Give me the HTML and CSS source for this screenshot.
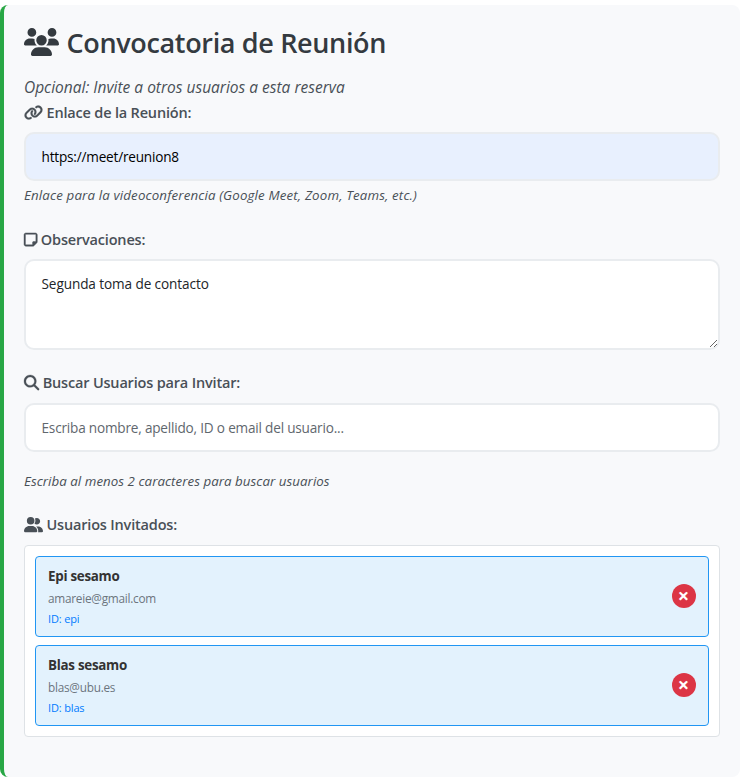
FILE: index.html
```
<!DOCTYPE html>
<html lang="es">
<head>
<meta charset="utf-8">
<title>Convocatoria de Reunión</title>
<link rel="stylesheet" href="styles.css">
</head>
<body>
<section class="panel">
  <h3 class="title">
    <svg class="icon" viewBox="0 0 640 512"><path d="M144 0a80 80 0 1 1 0 160A80 80 0 1 1 144 0zM512 0a80 80 0 1 1 0 160A80 80 0 1 1 512 0zM0 298.700C0 239.800 47.800 192 106.700 192h42.700c15.900 0 31 3.500 44.600 9.700c-1.300 7.200-1.900 14.700-1.900 22.300c0 38.200 16.800 72.500 43.300 96c-.2 0-.4 0-.7 0H21.300C9.600 320 0 310.400 0 298.700zM405.300 320c-.2 0-.4 0-.7 0c26.600-23.500 43.300-57.800 43.300-96c0-7.600-.7-15-1.900-22.300c13.600-6.300 28.700-9.700 44.600-9.700h42.700C592.200 192 640 239.800 640 298.700c0 11.800-9.600 21.300-21.300 21.300H405.300zM224 224a96 96 0 1 1 192 0 96 96 0 1 1 -192 0zM128 485.300C128 411.700 187.700 352 261.300 352H378.700C452.300 352 512 411.700 512 485.300c0 14.700-11.900 26.700-26.700 26.700H154.700c-14.700 0-26.700-11.900-26.700-26.700z"/></svg>
    <span>Convocatoria de Reunión</span>
  </h3>
  <p class="subtitle">Opcional: Invite a otros usuarios a esta reserva</p>

  <div class="group group-link">
    <label class="label" for="link">
      <svg class="icon icon-link" viewBox="0 0 640 512"><path d="M579.8 267.7c56.5-56.5 56.5-148 0-204.5c-50-50-128.8-56.5-186.3-15.4l-1.6 1.1c-14.4 10.3-17.7 30.3-7.4 44.6s30.3 17.7 44.6 7.4l1.6-1.1c32.1-22.9 76-19.3 103.8 8.6c31.5 31.5 31.5 82.5 0 114L422.3 334.8c-31.5 31.5-82.5 31.5-114 0c-27.9-27.9-31.5-71.8-8.6-103.8l1.1-1.6c10.3-14.4 6.9-34.4-7.4-44.6s-34.4-6.9-44.6 7.4l-1.1 1.6C206.5 251.2 213 330 263 380c56.5 56.5 148 56.5 204.5 0L579.8 267.7zM60.2 244.3c-56.5 56.5-56.5 148 0 204.5c50 50 128.8 56.5 186.3 15.4l1.6-1.1c14.4-10.3 17.7-30.3 7.4-44.6s-30.3-17.7-44.6-7.4l-1.6 1.1c-32.1 22.9-76 19.3-103.8-8.6C74 372 74 321 105.5 289.5L217.7 177.2c31.5-31.5 82.5-31.5 114 0c27.9 27.9 31.5 71.8 8.600 103.900l-1.1 1.600c-10.300 14.400-6.900 34.400 7.400 44.600s34.400 6.900 44.600-7.400l1.100-1.600C433.500 260.800 427 182 377 132c-56.500-56.500-148-56.500-204.500 0L60.200 244.300z"/></svg>
      <span>Enlace de la Reunión:</span>
    </label>
    <input class="control filled" id="link" type="text" value="https://meet/reunion8">
    <p class="hint">Enlace para la videoconferencia (Google Meet, Zoom, Teams, etc.)</p>
  </div>

  <div class="group group-notes">
    <label class="label" for="notes">
      <svg class="icon icon-note" viewBox="0 0 448 512"><path d="M64 80C55.200 80 48 87.200 48 96V416C48 424.800 55.200 432 64 432H288V352C288 334.300 302.300 320 320 320H400V96C400 87.200 392.800 80 384 80H64zM288 480H64C28.700 480 0 451.300 0 416V96C0 60.700 28.700 32 64 32H384C419.300 32 448 60.700 448 96V325.500C448 342.500 441.300 358.800 429.300 370.800L338.800 461.300C326.800 473.300 310.500 480 293.500 480H288z"/></svg>
      <span>Observaciones:</span>
    </label>
    <textarea class="control notes" id="notes">Segunda toma de contacto</textarea>
  </div>

  <div class="group group-search">
    <label class="label" for="search">
      <svg class="icon icon-search" viewBox="0 0 512 512"><path d="M416 208c0 45.900-14.900 88.300-40 122.700L502.600 457.400c12.500 12.500 12.500 32.800 0 45.300s-32.800 12.500-45.300 0L330.700 376c-34.400 25.200-76.800 40-122.700 40C93.100 416 0 322.900 0 208S93.100 0 208 0S416 93.100 416 208zM208 352a144 144 0 1 0 0-288 144 144 0 1 0 0 288z"/></svg>
      <span>Buscar Usuarios para Invitar:</span>
    </label>
    <input class="control" id="search" type="text" placeholder="Escriba nombre, apellido, ID o email del usuario...">
    <p class="hint hint-search">Escriba al menos 2 caracteres para buscar usuarios</p>
  </div>

  <div class="group">
    <div class="label">
      <svg class="icon" viewBox="0 0 640 512"><path d="M96 128a128 128 0 1 1 256 0A128 128 0 1 1 96 128zM0 482.300C0 383.800 79.800 304 178.300 304h91.400C368.200 304 448 383.800 448 482.300c0 16.400-13.300 29.700-29.700 29.700H29.700C13.300 512 0 498.700 0 482.300zM609.300 512H471.400c5.400-9.400 8.600-20.300 8.600-32v-8c0-60.700-27.100-115.200-69.800-151.800c2.400-.1 4.700-.2 7.100-.2h61.400C567.800 320 640 392.200 640 481.300c0 17-13.800 30.700-30.700 30.700zM432 256c-31 0-59-12.600-79.300-32.900C372.400 196.500 384 163.600 384 128c0-26.800-6.600-52.100-18.300-74.300C384.300 40.100 407.200 32 432 32c61.900 0 112 50.100 112 112s-50.100 112-112 112z"/></svg>
      <span>Usuarios Invitados:</span>
    </div>
    <div class="guests">
      <div class="guest">
        <div class="info">
          <div class="name">Epi sesamo</div>
          <div class="email">amareie@gmail.com</div>
          <div class="uid">ID: epi</div>
        </div>
        <button class="remove" type="button">×</button>
      </div>
      <div class="guest">
        <div class="info">
          <div class="name">Blas sesamo</div>
          <div class="email">blas@ubu.es</div>
          <div class="uid">ID: blas</div>
        </div>
        <button class="remove" type="button">×</button>
      </div>
    </div>
  </div>
</section>
</body>
</html>
```
FILE: styles.css
```
* { box-sizing: border-box; }
body {
  margin: 0;
  padding-top: 5px;
  background: #fff;
  font-family: "Open Sans", "Noto Sans", sans-serif;
  color: #495057;
}
.panel {
  width: 740px;
  height: 772px;
  padding: 20px 20px 0;
  background: #f8f9fb;
  border-left: 4px solid #28a745;
  border-radius: 8px;
}
.title, .subtitle, .hint { margin: 0; white-space: nowrap; }
.title {
  display: flex;
  align-items: center;
  gap: 8px;
  height: 36px;
  color: #343a40;
  font-size: 27px;
  font-weight: 600;
  letter-spacing: -0.34px;
  line-height: 36px;
}
.icon {
  flex: none;
  width: 19px;
  height: 15.2px;
  margin-left: -0.5px;
  fill: currentColor;
  overflow: visible;
}
.title .icon { width: 35px; height: 28px; margin-bottom: 2px; }
.icon-link { stroke: currentColor; stroke-width: 8px; }
.icon-note { width: 13.3px; stroke: currentColor; stroke-width: 14px; }
.icon-search { width: 15.2px; stroke: currentColor; stroke-width: 10px; }
.subtitle {
  margin-top: 14px;
  height: 26px;
  font-size: 15.5px;
  line-height: 24px;
  font-style: italic;
}
.label {
  display: flex;
  align-items: center;
  gap: 4px;
  height: 24px;
  font-size: 14.5px;
  font-weight: 600;
  letter-spacing: -0.18px;
  line-height: 24px;
  white-space: nowrap;
}
.control {
  display: block;
  width: 100%;
  height: 49px;
  margin: 8px 0 0;
  padding: 0 15.5px;
  border: 2px solid #e9ecef;
  border-radius: 10px;
  outline: 0;
  background: #fff;
  color: #212529;
  font: 13.6px "Open Sans", "Noto Sans", sans-serif;
  letter-spacing: -0.2px;
}
.control::placeholder { color: #5f676e; opacity: 1; }
.filled { margin-top: 7px; background: #e8f0fe; color: #000; }
.notes {
  height: 91px;
  margin-top: 7px;
  padding-top: 13px;
  line-height: 20px;
  letter-spacing: -0.1px;
  resize: vertical;
}
.hint {
  margin-top: 4px;
  height: 20px;
  font-size: 13.3px;
  line-height: 20px;
  letter-spacing: 0.15px;
  font-style: italic;
}
.hint-search { margin-top: 19px; letter-spacing: 0.05px; }
.group-link { height: 127px; }
.group-notes { height: 143px; }
.group-search { height: 142px; }
.guests {
  display: flex;
  flex-direction: column;
  gap: 8px;
  height: 192px;
  margin-top: 8px;
  padding: 10px;
  border: 1px solid #dee2e6;
  border-radius: 4px;
  background: #fff;
}
.guest {
  display: flex;
  align-items: center;
  justify-content: space-between;
  height: 81px;
  padding: 0 12px;
  border: 1px solid #2196f3;
  border-radius: 4px;
  background: #e3f2fd;
}
.info { padding-top: 1px; }
.name { height: 22px; font-size: 13.4px; line-height: 20px; font-weight: 700; letter-spacing: -0.28px; color: #333; }
.email { height: 22px; font-size: 11.8px; line-height: 20px; letter-spacing: -0.25px; color: #6c757d; }
.uid { height: 18px; font-size: 11px; line-height: 18px; font-weight: 500; letter-spacing: -0.15px; color: #007bff; }
.remove {
  width: 24px;
  height: 24px;
  margin-bottom: 1px;
  padding: 0 1px 0 0;
  border: 0;
  border-radius: 50%;
  background: #dc3545;
  color: #fff;
  font: 700 20px/22px "Open Sans", sans-serif;
}
```
